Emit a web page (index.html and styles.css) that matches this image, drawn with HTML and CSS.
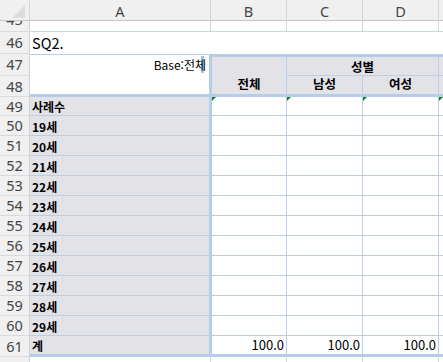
FILE: index.html
```html
<!DOCTYPE html>
<html lang="ko">
<head>
<meta charset="utf-8">
<link rel="stylesheet" href="styles.css">
</head>
<body>
<div class="sheet">
  <!-- column header -->
  <div class="corner"><svg width="30" height="21" viewBox="0 0 30 21"><polygon points="25,5 25,18 12,18" fill="#dcdcdc"/></svg></div>
  <div class="ch">A</div>
  <div class="ch">B</div>
  <div class="ch">C</div>
  <div class="ch">D</div>
  <div class="ch last"></div>

  <!-- row 45 -->
  <div class="rh clip-top"><span>45</span></div>
  <div class="c r45"></div><div class="c r45"></div><div class="c r45"></div><div class="c r45"></div><div class="c r45 e"></div>

  <!-- row 46 -->
  <div class="rh"><span>46</span></div>
  <div class="c r46 title">SQ2.</div><div class="c r46"></div><div class="c r46"></div><div class="c r46"></div><div class="c r46"></div>

  <!-- row 47 / 48 -->
  <div class="rh"><span>47</span></div>
  <div class="c base">Base:전<span class="sel">체</span></div>
  <div class="c hb">전체</div>
  <div class="c hcd">성별</div>
  <div class="c he1"></div>

  <div class="rh"><span>48</span></div>
  <div class="c hc">남성</div>
  <div class="c hc">여성</div>
  <div class="c he2"></div>

  <!-- row 49 -->
  <div class="rh"><span>49</span></div>
  <div class="c lab">사례수</div>
  <div class="c vb"><i class="err"></i></div>
  <div class="c v"><i class="err"></i></div>
  <div class="c v"><i class="err"></i></div>
  <div class="c ve"><i class="err"></i></div>

  <div class="rh"><span>50</span></div><div class="c lab">19세</div><div class="c vb"></div><div class="c v"></div><div class="c v"></div><div class="c ve"></div>
  <div class="rh"><span>51</span></div><div class="c lab">20세</div><div class="c vb"></div><div class="c v"></div><div class="c v"></div><div class="c ve"></div>
  <div class="rh"><span>52</span></div><div class="c lab">21세</div><div class="c vb"></div><div class="c v"></div><div class="c v"></div><div class="c ve"></div>
  <div class="rh"><span>53</span></div><div class="c lab">22세</div><div class="c vb"></div><div class="c v"></div><div class="c v"></div><div class="c ve"></div>
  <div class="rh"><span>54</span></div><div class="c lab">23세</div><div class="c vb"></div><div class="c v"></div><div class="c v"></div><div class="c ve"></div>
  <div class="rh"><span>55</span></div><div class="c lab">24세</div><div class="c vb"></div><div class="c v"></div><div class="c v"></div><div class="c ve"></div>
  <div class="rh"><span>56</span></div><div class="c lab">25세</div><div class="c vb"></div><div class="c v"></div><div class="c v"></div><div class="c ve"></div>
  <div class="rh"><span>57</span></div><div class="c lab">26세</div><div class="c vb"></div><div class="c v"></div><div class="c v"></div><div class="c ve"></div>
  <div class="rh"><span>58</span></div><div class="c lab">27세</div><div class="c vb"></div><div class="c v"></div><div class="c v"></div><div class="c ve"></div>
  <div class="rh"><span>59</span></div><div class="c lab">28세</div><div class="c vb"></div><div class="c v"></div><div class="c v"></div><div class="c ve"></div>
  <div class="rh"><span>60</span></div><div class="c lab">29세</div><div class="c vb"></div><div class="c v"></div><div class="c v"></div><div class="c ve"></div>

  <!-- row 61 -->
  <div class="rh"><span>61</span></div>
  <div class="c lab tot">계</div>
  <div class="c vb tot num">100.0</div>
  <div class="c v tot num">100.0</div>
  <div class="c v tot num">100.0</div>
  <div class="c ve tot"></div>

  <!-- row 62 -->
  <div class="rh clip-bot"><span>62</span></div>
  <div class="c r62"></div><div class="c r62"></div><div class="c r62"></div><div class="c r62"></div><div class="c r62 e"></div>
</div>
</body>
</html>
```

FILE: styles.css
```css
html, body {
  margin: 0;
  padding: 0;
  background: #ffffff;
}
body {
  width: 443px;
  height: 362px;
  overflow: hidden;
  font-family: "Noto Sans CJK KR", "Noto Sans", sans-serif;
  color: #000;
}
.sheet {
  display: grid;
  grid-template-columns: 30px 181px 76px 76px 76px 1fr;
  grid-template-rows: 21px 11px 22px 22px 21px 19px repeat(11, 20px) 21px 20px;
  width: 443px;
}
.sheet > div {
  box-sizing: border-box;
  min-width: 0;
}

/* headers */
.corner {
  background: #f0f0f0;
  border-right: 1px solid #d4d4d4;
  border-bottom: 1px solid #c6c6c6;
  line-height: 0;
}
.ch {
  background: #f0f0f0;
  border-right: 1px solid #d4d4d4;
  border-bottom: 1px solid #c6c6c6;
  font-family: "Noto Sans", "Open Sans", sans-serif;
  font-size: 14.5px;
  color: #444;
  display: flex;
  align-items: center;
  justify-content: center;
  padding-top: 1px;
}
.ch.last { border-right: 0; }

.rh {
  grid-column: 1;
  background: #f0f0f0;
  border-right: 1px solid #cfd3d8;
  border-bottom: 1px solid #dadada;
  font-family: "Noto Sans", "Open Sans", sans-serif;
  font-size: 14.5px;
  color: #444;
  display: flex;
  align-items: center;
  justify-content: center;
  overflow: hidden;
  line-height: 1;
}
.rh.clip-top { align-items: flex-end; padding-bottom: 5px; }
.rh.clip-top span { display: block; }
.rh.clip-bot { align-items: flex-start; padding-top: 4px; border-bottom: 0; }

/* cells */
.c {
  background: #fff;
  position: relative;
  white-space: nowrap;
}
.r45 {
  border-right: 1px solid #d4d4d4;
  border-bottom: 1px solid #c9d7e6;
}
.r45.e { border-right: 0; }
.r62 { border-right: 1px solid #d4d4d4; }
.r62.e { border-right: 0; }

.title {
  font-size: 14.5px;
  padding-left: 2px;
  display: flex;
  align-items: flex-end;
  padding-bottom: 1px;
  overflow: visible;
}

.base {
  grid-row: span 2;
  border-top: 1px solid #b7d0ea;
  border-right: 2px solid #b4cee9;
  border-bottom: 3px solid #b4cee9;
  font-size: 12px;
  text-align: right;
  padding-right: 3px;
  padding-top: 2px;
  line-height: 16px;
}
.sel {
  background: linear-gradient(to right, transparent 55%, #9fc3ea 55%, #9fc3ea 85%, transparent 85%);
}

.hb, .hcd, .hc, .he1, .he2 {
  background: #e3e2e7;
  font-weight: 700;
  font-size: 12.5px;
  display: flex;
  justify-content: center;
}
.hb {
  grid-row: span 2;
  border-top: 3px solid #b4cee9;
  border-left: 1px solid #b4cee9;
  border-right: 1px solid #b7d0ea;
  border-bottom: 3px solid #b4cee9;
  align-items: flex-end;
  padding-bottom: 1px;
}
.hcd {
  grid-column: span 2;
  border-top: 3px solid #b4cee9;
  border-right: 1px solid #b7d0ea;
  border-bottom: 1px solid #b7d0ea;
  align-items: center;
}
.he1 {
  border-top: 3px solid #b4cee9;
  border-bottom: 1px solid #b7d0ea;
}
.hc {
  border-right: 1px solid #b7d0ea;
  border-bottom: 3px solid #b4cee9;
  align-items: flex-end;
  padding-bottom: 1px;
}
.he2 {
  border-bottom: 3px solid #b4cee9;
}

.lab {
  background: #e3e2e7;
  border-right: 2px solid #b4cee9;
  border-bottom: 1px solid #b7d0ea;
  font-weight: 700;
  font-size: 12px;
  padding-left: 2px;
  display: flex;
  align-items: flex-end;
  line-height: 17px;
}
.vb {
  border-left: 1px solid #b4cee9;
  border-right: 1px solid #b7d0ea;
  border-bottom: 1px solid #b7d0ea;
}
.v {
  border-right: 1px solid #b7d0ea;
  border-bottom: 1px solid #b7d0ea;
}
.ve {
  border-bottom: 1px solid #b7d0ea;
}
.tot { border-bottom: 3px solid #b4cee9; }
.num {
  font-size: 13px;
  text-align: right;
  padding-right: 2px;
  line-height: 17px;
  color: #000;
}

.err {
  position: absolute;
  left: 0;
  top: 0;
  width: 0;
  height: 0;
  border-top: 4px solid #1f7a1f;
  border-right: 4px solid transparent;
}
```
